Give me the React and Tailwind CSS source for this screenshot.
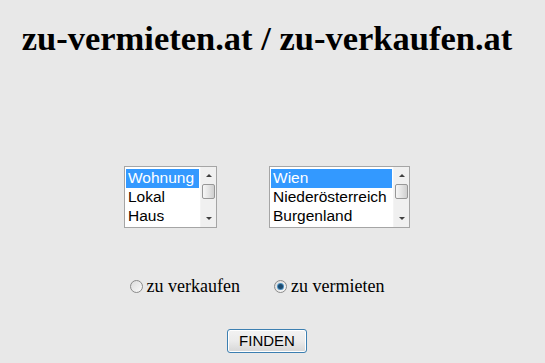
import React from 'react';

function ScrollBar() {
  return (
    <div className="flex w-[16px] flex-col bg-[#f0f0f0] border-l border-[#f4f4f4]">
      <div className="flex h-[17px] items-center justify-center">
        <div className="h-0 w-0 border-x-[3px] border-b-[3px] border-x-transparent border-b-[#404040]" />
      </div>
      <div className="mx-[1px] h-[15px] rounded-[2px] border border-[#979797] bg-gradient-to-r from-[#f6f6f6] via-[#e4e4e4] to-[#cfcfcf]" />
      <div className="flex-1" />
      <div className="flex h-[17px] items-center justify-center">
        <div className="h-0 w-0 border-x-[3px] border-t-[3px] border-x-transparent border-t-[#404040]" />
      </div>
    </div>
  );
}

function ListBox({ items, width }) {
  return (
    <div className={`flex h-[62px] border border-[#a5a5a5] bg-white ${width}`}>
      <div className="flex-1 overflow-hidden p-[1px] pt-[2px]">
        {items.map((item, i) => (
          <div
            key={item}
            className={`h-[19px] whitespace-nowrap pl-[2px] text-[15.5px] leading-[18px] ${i === 0 ? 'bg-[#3399ff] text-white' : 'text-black'}`}
          >
            {item}
          </div>
        ))}
      </div>
      <ScrollBar />
    </div>
  );
}

function Radio({ checked, label }) {
  return (
    <label className="flex items-center gap-[4px]">
      <span className="flex h-[13px] w-[13px] items-center justify-center rounded-full border border-[#8a8a8a] bg-gradient-to-br from-[#dcdcdc] to-[#fafafa]">
        {checked && <span className="h-[5px] w-[5px] rounded-full bg-[#1c4a6e] ring-1 ring-[#4b8fc0]" />}
      </span>
      <span className="font-['Liberation_Serif',serif] text-[18px] leading-[20px] text-black">{label}</span>
    </label>
  );
}

export default function App() {
  return (
    <div className="h-[363px] w-[545px] overflow-hidden bg-[#e8e8e8] font-['Liberation_Sans',Arial,sans-serif]">
      <div className="flex w-[534px] flex-col items-center">
        <h1 className="mt-[18px] font-['Liberation_Serif',serif] text-[34.5px] font-bold leading-[40px] text-black">
          zu-vermieten.at / zu-verkaufen.at
        </h1>

        <div className="mt-[108px] flex gap-[52px]">
          <ListBox items={['Wohnung', 'Lokal', 'Haus']} width="w-[93px]" />
          <ListBox items={['Wien', 'Niederösterreich', 'Burgenland']} width="w-[141px]" />
        </div>

        <div className="mt-[48px] flex gap-[34px] pr-[20px]">
          <Radio label="zu verkaufen" />
          <Radio checked label="zu vermieten" />
        </div>

        <button className="mt-[33px] h-[24px] w-[80px] rounded-[3px] border border-[#3c7fb1] bg-gradient-to-b from-[#f2f2f2] via-[#ebebeb] to-[#d6d6d6] text-[15px] leading-[20px] text-black shadow-[inset_0_0_0_1px_#fff]">
          FINDEN
        </button>
      </div>
    </div>
  );
}
